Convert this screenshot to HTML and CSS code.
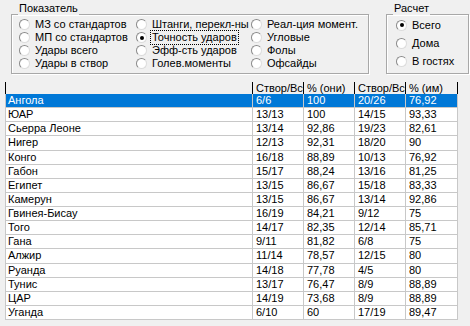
FILE: index.html
```html
<!DOCTYPE html>
<html lang="ru">
<head>
  <meta charset="UTF-8">
  <title>Показатель</title>
  <link rel="stylesheet" href="styles.css">
</head>
<body>
  <div class="top">
    <div class="group group-stat">
      <span class="group-title">Показатель</span>
      <div class="options">
        <label class="opt"><span class="radio"></span>МЗ со стандартов</label>
        <label class="opt"><span class="radio"></span>МП со стандартов</label>
        <label class="opt"><span class="radio"></span>Удары всего</label>
        <label class="opt"><span class="radio"></span>Удары в створ</label>
        <label class="opt"><span class="radio"></span>Штанги, перекл-ны</label>
        <label class="opt"><span class="radio checked"></span><span class="focus">Точность ударов</span></label>
        <label class="opt"><span class="radio"></span>Эфф-сть ударов</label>
        <label class="opt"><span class="radio"></span>Голев.моменты</label>
        <label class="opt"><span class="radio"></span>Реал-ция момент.</label>
        <label class="opt"><span class="radio"></span>Угловые</label>
        <label class="opt"><span class="radio"></span>Фолы</label>
        <label class="opt"><span class="radio"></span>Офсайды</label>
      </div>
    </div>
    <div class="group group-calc">
      <span class="group-title">Расчет</span>
      <div class="calc-options">
        <label class="opt"><span class="radio checked"></span>Всего</label>
        <label class="opt"><span class="radio"></span>Дома</label>
        <label class="opt"><span class="radio"></span>В гостях</label>
      </div>
    </div>
  </div>

  <div class="grid">
    <div class="row head">
      <div class="cell"></div>
      <div class="cell">Створ/Всего</div>
      <div class="cell">% (они)</div>
      <div class="cell">Створ/Всего</div>
      <div class="cell">% (им)</div>
    </div>
    <div class="row sel"><div class="cell">Ангола</div><div class="cell">6/6</div><div class="cell">100</div><div class="cell">20/26</div><div class="cell">76,92</div></div>
    <div class="row"><div class="cell">ЮАР</div><div class="cell">13/13</div><div class="cell">100</div><div class="cell">14/15</div><div class="cell">93,33</div></div>
    <div class="row"><div class="cell">Сьерра Леоне</div><div class="cell">13/14</div><div class="cell">92,86</div><div class="cell">19/23</div><div class="cell">82,61</div></div>
    <div class="row"><div class="cell">Нигер</div><div class="cell">12/13</div><div class="cell">92,31</div><div class="cell">18/20</div><div class="cell">90</div></div>
    <div class="row"><div class="cell">Конго</div><div class="cell">16/18</div><div class="cell">88,89</div><div class="cell">10/13</div><div class="cell">76,92</div></div>
    <div class="row"><div class="cell">Габон</div><div class="cell">15/17</div><div class="cell">88,24</div><div class="cell">13/16</div><div class="cell">81,25</div></div>
    <div class="row"><div class="cell">Египет</div><div class="cell">13/15</div><div class="cell">86,67</div><div class="cell">15/18</div><div class="cell">83,33</div></div>
    <div class="row"><div class="cell">Камерун</div><div class="cell">13/15</div><div class="cell">86,67</div><div class="cell">13/14</div><div class="cell">92,86</div></div>
    <div class="row"><div class="cell">Гвинея-Бисау</div><div class="cell">16/19</div><div class="cell">84,21</div><div class="cell">9/12</div><div class="cell">75</div></div>
    <div class="row"><div class="cell">Того</div><div class="cell">14/17</div><div class="cell">82,35</div><div class="cell">12/14</div><div class="cell">85,71</div></div>
    <div class="row"><div class="cell">Гана</div><div class="cell">9/11</div><div class="cell">81,82</div><div class="cell">6/8</div><div class="cell">75</div></div>
    <div class="row"><div class="cell">Алжир</div><div class="cell">11/14</div><div class="cell">78,57</div><div class="cell">12/15</div><div class="cell">80</div></div>
    <div class="row"><div class="cell">Руанда</div><div class="cell">14/18</div><div class="cell">77,78</div><div class="cell">4/5</div><div class="cell">80</div></div>
    <div class="row"><div class="cell">Тунис</div><div class="cell">13/17</div><div class="cell">76,47</div><div class="cell">8/9</div><div class="cell">88,89</div></div>
    <div class="row"><div class="cell">ЦАР</div><div class="cell">14/19</div><div class="cell">73,68</div><div class="cell">8/9</div><div class="cell">88,89</div></div>
    <div class="row"><div class="cell">Уганда</div><div class="cell">6/10</div><div class="cell">60</div><div class="cell">17/19</div><div class="cell">89,47</div></div>
  </div>
</body>
</html>
```

FILE: styles.css
```css
body {
  margin: 0;
  background: #f0f0f0;
  color: #000;
  font-family: "Liberation Sans", Arial, sans-serif;
  font-size: 11px;
  line-height: 13px;
}

.top {
  display: flex;
  padding: 14px 0 0 11px;
  gap: 17px;
}

.group {
  position: relative;
  box-sizing: border-box;
  height: 60px;
  border: 1px solid #a8a8a8;
  box-shadow: inset 1px 1px 0 #fff, 1px 1px 0 #fff;
}

.group-title {
  position: absolute;
  top: -13px;
  left: 6px;
  padding: 0 1px;
  background: #f0f0f0;
}

.group-stat {
  width: 358px;
  padding: 3px 0 0 7px;
}

.group-calc {
  width: 83px;
  padding: 1px 0 0 9px;
}

.options {
  display: grid;
  grid-template-columns: 117px 115px auto;
  grid-template-rows: repeat(4, 13px);
  grid-auto-flow: column;
}

.calc-options {
  display: grid;
  grid-template-rows: repeat(3, 18px);
}

.opt {
  display: flex;
  align-items: center;
  gap: 5px;
  white-space: nowrap;
}

.radio {
  position: relative;
  box-sizing: border-box;
  width: 11px;
  height: 11px;
  flex: none;
  border-radius: 50%;
  background: #fff;
  border: 1px solid;
  border-color: #8a8a8a #dcdcdc #dcdcdc #8a8a8a;
}

.radio.checked::after {
  content: '';
  position: absolute;
  left: 2.5px;
  top: 2.5px;
  width: 4px;
  height: 4px;
  border-radius: 50%;
  background: #000;
}

.focus {
  outline: 1px dotted #000;
  outline-offset: 0;
  padding: 0 1px 0 0;
  margin-left: -1px;
  padding-left: 1px;
}

.grid {
  margin: 8px 0 0 5px;
  width: 453px;
}

.row {
  display: grid;
  grid-template-columns: 247px 51px 51px 51px 52px;
  box-sizing: border-box;
  height: 14.125px;
  background: #fff;
  border-right: 1px solid #c8c8c8;
  border-bottom: 1px solid #c8c8c8;
}

.cell {
  border-left: 1px solid #c8c8c8;
  padding-left: 2px;
  overflow: hidden;
  white-space: nowrap;
}

.cell + .cell {
  padding-left: 3px;
}

.row.head {
  height: 12px;
  line-height: 12px;
  background: #f0f0f0;
  border-bottom: none;
  border-right-color: #000;
}

.row.head .cell {
  border-left-color: #000;
}

.row.sel {
  background: #0078d7;
  color: #fff;
}
```
